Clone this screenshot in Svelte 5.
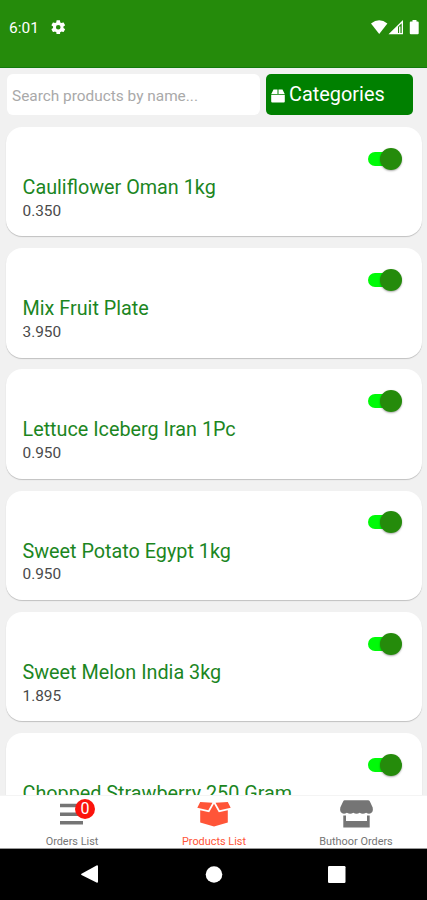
<script lang="ts">
	type Product = { name: string; price: string; enabled: boolean };

	let search = $state("");
	let active = $state("products");
	let orderCount = $state(0);
	let products: Product[] = $state([
		{ name: "Cauliflower Oman 1kg", price: "0.350", enabled: true },
		{ name: "Mix Fruit Plate", price: "3.950", enabled: true },
		{ name: "Lettuce Iceberg Iran 1Pc", price: "0.950", enabled: true },
		{ name: "Sweet Potato Egypt 1kg", price: "0.950", enabled: true },
		{ name: "Sweet Melon India 3kg", price: "1.895", enabled: true },
		{ name: "Chopped Strawberry 250 Gram", price: "", enabled: true }
	]);
</script>

<div class="screen">
	<header class="status">
		<span class="time">6:01</span>
		<svg class="gear" viewBox="2 2 20 20">
			<path
				d="M19.14 12.94c.04-.3.06-.61.06-.94s-.02-.64-.07-.94l2.03-1.58a.5.5 0 0 0 .12-.61l-1.92-3.32a.5.5 0 0 0-.59-.22l-2.39.96a7 7 0 0 0-1.62-.94l-.36-2.54a.5.5 0 0 0-.48-.41h-3.84a.5.5 0 0 0-.47.41l-.36 2.54a7 7 0 0 0-1.62.94l-2.39-.96a.5.5 0 0 0-.59.22L2.74 8.87a.5.5 0 0 0 .12.61l2.03 1.58a6 6 0 0 0 0 1.88l-2.03 1.58a.5.5 0 0 0-.12.61l1.92 3.32c.12.22.37.29.59.22l2.39-.96c.5.38 1.03.7 1.62.94l.36 2.54c.05.24.24.41.48.41h3.84c.24 0 .44-.17.47-.41l.36-2.54a7 7 0 0 0 1.62-.94l2.39.96c.22.08.47 0 .59-.22l1.92-3.32a.5.5 0 0 0-.12-.61zM12 15.2a3.2 3.2 0 1 1 0-6.4 3.2 3.2 0 0 1 0 6.4z"
			/>
		</svg>
		<svg class="signals" viewBox="0 0 49 15">
			<path d="M0 3.5Q8.2-3 16.4 3.5L8.2 14z" />
			<path fill-rule="evenodd" d="M17.5 14.2 32 0v14.2zM27 6.8v6.2h3.7V3.2z" />
			<path d="M28.1 6.5h1.3v6.5h-1.3z" />
			<path d="M41.5 0h4v1.5h1.2q1 0 1 1v10.7q0 1-1 1h-6.9q-1 0-1-1V2.5q0-1 1-1h1.7z" />
		</svg>
	</header>

	<main>
		<div class="toolbar">
			<input class="search" placeholder="Search products by name..." bind:value={search} />
			<button class="categories">
				<svg viewBox="0 0 14 14">
					<path d="M2.5.5h4v4.5H.3zM7.5.5h4L13.7 5H7.5zM.2 5.800h13.600v6.700q0 1-1 1H1.200q-1 0-1-1z" />
				</svg>
				Categories
			</button>
		</div>

		<div class="list">
			{#each products as product}
				<div class="card">
					<button
						class="switch"
						class:off={!product.enabled}
						aria-label={product.name}
						onclick={() => (product.enabled = !product.enabled)}
					>
						<span class="knob"></span>
					</button>
					<h2 class="name">{product.name}</h2>
					<p class="price">{product.price}</p>
				</div>
			{/each}
		</div>
	</main>

	<nav class="tabs">
		<button class="tab" class:active={active === "orders"} onclick={() => (active = "orders")}>
			<span class="icon">
				<svg viewBox="0 0 36 30">
					<path d="M6 4.800h23v3.500H6zM6 13.500h23V17H6zM6 22h23v3.500H6z" />
				</svg>
				<span class="badge">{orderCount}</span>
			</span>
			Orders List
		</button>
		<button class="tab" class:active={active === "products"} onclick={() => (active = "products")}>
			<span class="icon">
				<svg viewBox="0 0 36 30">
					<path d="M4.200 3 16.500 3.800 12.300 11.300 1.300 8.800zM31.800 3 19.500 3.800 23.700 11.300l11-2.500z" />
					<path d="M4.200 11.200 13.200 13.300 18 4.800 22.800 13.300 31.800 11.200v12.300L18 27.500 4.200 23.500z" />
				</svg>
			</span>
			Products List
		</button>
		<button class="tab" class:active={active === "shop"} onclick={() => (active = "shop")}>
			<span class="icon">
				<svg viewBox="0 0 36 30">
					<path
						d="M7 1.200h23q1.300 0 1.900 1.200l2.800 6q.6 2.600-.4 4.600-2.500 3-6.200.7-3.400 2-6.400 0-3.200 2-6.400 0-3 2-6.400 0-3.700 2.300-6.200-.7-1-2-.4-4.600l2.800-6q.6-1.200 1.500-1.200z"
					/>
					<path d="M5.300 16.500H8v5.500h21v-5.500h2.700v12H5.300z" />
				</svg>
			</span>
			Buthoor Orders
		</button>
	</nav>

	<footer class="system">
		<svg viewBox="0 0 427 51">
			<path d="M81.500 24.800 97 16.200q1 0 1 1v15.600q0 1-1 1L81.500 26q-1-.6 0-1.200z" />
			<circle cx="214" cy="25.500" r="8.300" />
			<rect x="328" y="17" width="17.500" height="17" rx="1.200" />
		</svg>
	</footer>
</div>

<style>
	:global(body) {
		margin: 0;
	}
	.screen {
		display: flex;
		flex-direction: column;
		width: 427px;
		height: 900px;
		overflow: hidden;
		background: #f1f1f1;
		font-family: Roboto, sans-serif;
	}
	button {
		padding: 0;
		border: 0;
		background: none;
		font: inherit;
		cursor: pointer;
	}
	svg {
		fill: currentColor;
	}
	.status {
		display: flex;
		align-items: center;
		flex: none;
		box-sizing: border-box;
		height: 68px;
		padding: 0 7px 13px 9px;
		border-bottom: 1px solid #127a0c;
		background: #258b0b;
		color: #fff;
	}
	.time {
		width: 42px;
		padding-top: 1px;
		font-size: 15.5px;
	}
	.gear {
		width: 14.5px;
		height: 14.5px;
	}
	.signals {
		width: 49px;
		height: 15px;
		margin-left: auto;
	}
	main {
		flex: 1;
		min-height: 0;
		overflow: hidden;
	}
	.toolbar {
		display: flex;
		gap: 6px;
		padding: 6px 14px 12px 7px;
	}
	.search {
		box-sizing: border-box;
		width: 253px;
		height: 41px;
		padding: 2px 5px 0;
		border: 0;
		border-radius: 6px;
		outline: none;
		background: #fff;
		font: 15.4px Roboto, sans-serif;
	}
	.search::placeholder {
		color: #a9a9a9;
		opacity: 1;
	}
	.categories {
		display: flex;
		align-items: center;
		gap: 4px;
		flex: 1;
		height: 41px;
		padding: 0 5px;
		border-radius: 5px;
		background: #008000;
		color: #fff;
		font-size: 19.9px;
	}
	.categories svg {
		width: 14px;
		height: 14px;
		margin-top: 2px;
	}
	.list {
		display: flex;
		flex-direction: column;
		gap: 11.8px;
		padding: 0 5.5px 0 6px;
	}
	.card {
		display: flex;
		flex-direction: column;
		box-sizing: border-box;
		height: 109.4px;
		padding: 20.8px 20px 0 16.5px;
		border-radius: 16px;
		background: #fff;
		box-shadow: 0 1px 1px #0003;
	}
	.switch {
		position: relative;
		align-self: flex-end;
		flex: none;
		width: 34px;
		height: 22px;
	}
	.switch::before {
		content: "";
		position: absolute;
		inset: 4px 4px 4px 0;
		border-radius: 8px;
		background: #00fa08;
	}
	.knob {
		position: absolute;
		top: 0;
		right: 0;
		width: 22px;
		height: 22px;
		border-radius: 50%;
		background: #258b0b;
		box-shadow: 0 1px 2px #0005;
	}
	.off::before {
		background: #b5b5b5;
	}
	.off .knob {
		right: 12px;
		background: #eee;
	}
	.name {
		margin: 6.2px 0 0;
		color: #1c861f;
		font-size: 19.8px;
		font-weight: 400;
		line-height: 24px;
		white-space: nowrap;
	}
	.price {
		margin: 0.8px 0 0;
		color: #4a4a4a;
		font-size: 15.4px;
		line-height: 20px;
	}
	.tabs {
		display: flex;
		flex: none;
		box-sizing: border-box;
		height: 54px;
		padding-left: 1px;
		border-top: 1px solid #f4f4f4;
		border-bottom: 1px solid #999;
		background: #fff;
	}
	.tab {
		display: flex;
		flex-direction: column;
		align-items: center;
		flex: 1;
		padding-top: 3px;
		color: #757575;
		font-size: 10.9px;
		line-height: 13px;
	}
	.tab.active {
		color: #ff5538;
	}
	.icon {
		position: relative;
		width: 36px;
		height: 36px;
	}
	.icon svg {
		display: block;
		width: 36px;
		height: 30px;
	}
	.badge {
		position: absolute;
		top: 0;
		left: 21px;
		width: 20px;
		height: 20px;
		border-radius: 50%;
		background: #fb130c;
		color: #fff;
		font-size: 16px;
		line-height: 20px;
	}
	.system {
		flex: none;
		height: 51px;
		background: #000;
		color: #fff;
	}
	.system svg {
		display: block;
	}
</style>
